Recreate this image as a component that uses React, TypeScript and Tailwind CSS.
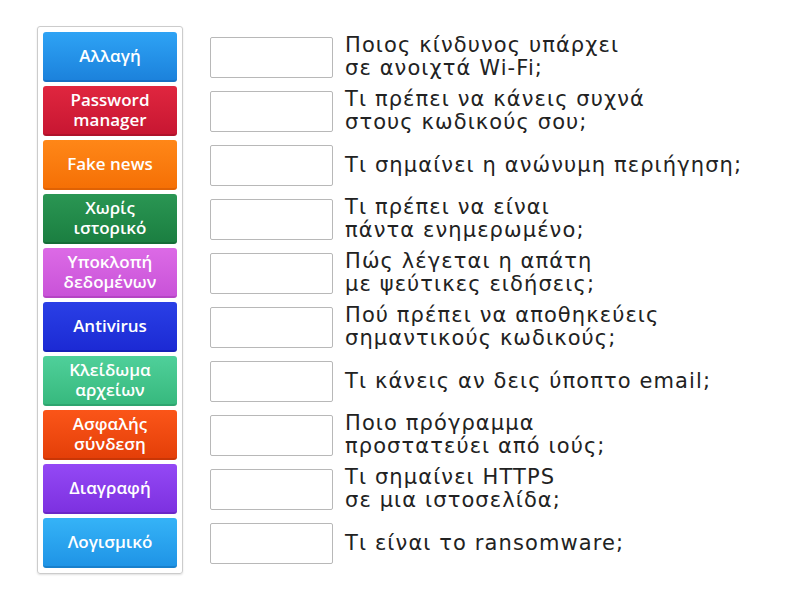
const items = [
  { label: ['Αλλαγή'], bg: 'bg-gradient-to-b from-[#2ea3f5] to-[#1c82dc] border-[#1670c4]' },
  { label: ['Password', 'manager'], bg: 'bg-gradient-to-b from-[#e0263f] to-[#c81632] border-[#b0122b]' },
  { label: ['Fake news'], bg: 'bg-gradient-to-b from-[#ff8717] to-[#f57005] border-[#e06204]' },
  { label: ['Χωρίς', 'ιστορικό'], bg: 'bg-gradient-to-b from-[#2a9653] to-[#1b7f41] border-[#156d37]' },
  { label: ['Υποκλοπή', 'δεδομένων'], bg: 'bg-gradient-to-b from-[#dc6ae6] to-[#c953d8] border-[#b544c4]' },
  { label: ['Antivirus'], bg: 'bg-gradient-to-b from-[#2a3fe6] to-[#1c2ad4] border-[#1620b8]' },
  { label: ['Κλείδωμα', 'αρχείων'], bg: 'bg-gradient-to-b from-[#4fd09a] to-[#37b97e] border-[#2ea56f]' },
  { label: ['Ασφαλής', 'σύνδεση'], bg: 'bg-gradient-to-b from-[#fb5518] to-[#e43f08] border-[#c93606]' },
  { label: ['Διαγραφή'], bg: 'bg-gradient-to-b from-[#9448f5] to-[#7d31e0] border-[#6c27c8]' },
  { label: ['Λογισμικό'], bg: 'bg-gradient-to-b from-[#35b3f7] to-[#1f94e6] border-[#1880cc]' },
];

const questions = [
  ['Ποιος κίνδυνος υπάρχει', 'σε ανοιχτά Wi-Fi;'],
  ['Τι πρέπει να κάνεις συχνά', 'στους κωδικούς σου;'],
  ['Τι σημαίνει η ανώνυμη περιήγηση;'],
  ['Τι πρέπει να είναι', 'πάντα ενημερωμένο;'],
  ['Πώς λέγεται η απάτη', 'με ψεύτικες ειδήσεις;'],
  ['Πού πρέπει να αποθηκεύεις', 'σημαντικούς κωδικούς;'],
  ['Τι κάνεις αν δεις ύποπτο email;'],
  ['Ποιο πρόγραμμα', 'προστατεύει από ιούς;'],
  ['Τι σημαίνει HTTPS', 'σε μια ιστοσελίδα;'],
  ['Τι είναι το ransomware;'],
];

export default function App() {
  return (
    <div className="w-[800px] h-[600px] bg-white flex items-start pt-[26px] pl-[37px]">
      <div className="w-[146px] border border-[#cccccc] rounded-[3px] shadow-[0_1px_2px_rgba(0,0,0,0.12)] px-[5px] py-[5px] flex flex-col gap-[4px]">
        {items.map((it, i) => (
          <div
            key={i}
            className={`h-[50px] rounded-[3px] border-b-2 flex flex-col items-center justify-center text-white text-[17px] leading-[20px] font-semibold ${it.bg}`}
            style={{ fontFamily: '"Open Sans", "Noto Sans", sans-serif' }}
          >
            {it.label.map((l, j) => (
              <span key={j}>{l}</span>
            ))}
          </div>
        ))}
      </div>
      <div className="ml-[27px] pt-[6px] flex flex-col gap-[4px]">
        {questions.map((q, i) => (
          <div key={i} className="h-[50px] flex items-center">
            <div className="w-[123px] h-[41px] border border-[#b8b8b8] rounded-[2px] bg-white shrink-0" />
            <div
              className="ml-[12px] text-[21px] leading-[23px] tracking-[1.1px] text-[#222] whitespace-nowrap"
              style={{ fontFamily: '"DejaVu Sans", sans-serif' }}
            >
              {q.map((l, j) => (
                <div key={j}>{l}</div>
              ))}
            </div>
          </div>
        ))}
      </div>
    </div>
  );
}
